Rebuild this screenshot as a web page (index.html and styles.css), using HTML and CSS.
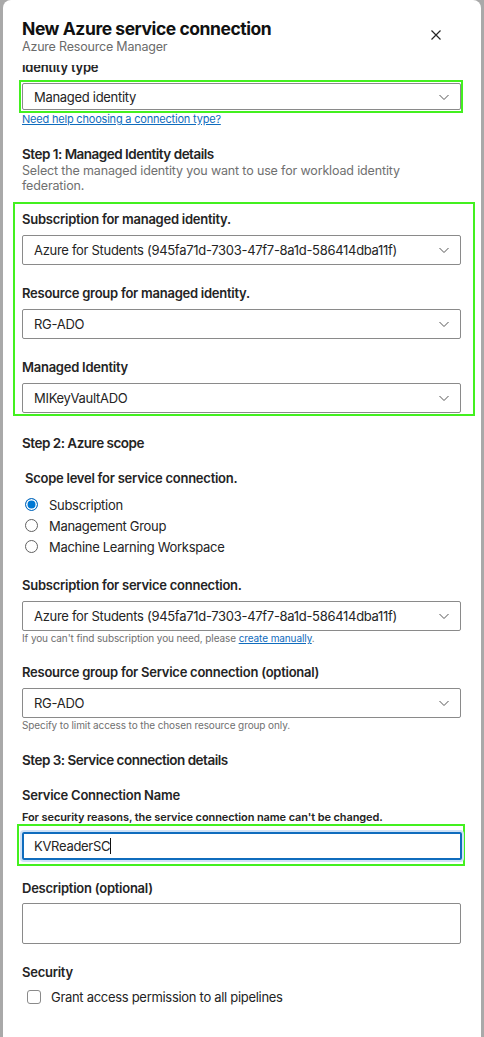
FILE: index.html
```html
<!DOCTYPE html>
<html lang="en">

<head>
    <meta charset="UTF-8">
    <meta name="viewport" content="width=device-width, initial-scale=1.0">
    <title>New Azure service connection</title>
    <link rel="stylesheet" href="styles.css">
</head>

<body>
    <div class="panel">
        <header class="panel-header">
            <div>
                <h1 class="panel-title">New Azure service connection</h1>
                <p class="panel-subtitle">Azure Resource Manager</p>
            </div>
            <button class="close-btn" aria-label="Close">
                <svg width="12" height="12" viewBox="0 0 12 12">
                    <path d="M1.5 1.5l9 9M10.5 1.5l-9 9" stroke="#242424" stroke-width="1.2" fill="none" />
                </svg>
            </button>
        </header>

        <div class="panel-body">
            <div class="form">
                <label class="field-label type-label">Identity type</label>
                <div class="mark mark-type">
                    <div class="select select-sm">
                        <span>Managed identity</span>
                        <svg class="chevron" width="12" height="12" viewBox="0 0 12 12"><path d="M1.5 4l4.5 4.5 4.5-4.5" /></svg>
                    </div>
                </div>
                <a class="help-link" href="#">Need help choosing a connection type?</a>

                <!-- step 1 -->
                <h2 class="step-title step-first">Step 1: Managed Identity details</h2>
                <p class="step-desc">Select the managed identity you want to use for workload identity federation.</p>

                <div class="mark mark-identity">
                    <div class="field">
                        <label class="field-label">Subscription for managed identity.</label>
                        <div class="select">
                            <span>Azure for Students (945fa71d-7303-47f7-8a1d-586414dba11f)</span>
                            <svg class="chevron" width="12" height="12" viewBox="0 0 12 12"><path d="M1.5 4l4.5 4.5 4.5-4.5" /></svg>
                        </div>
                    </div>
                    <div class="field">
                        <label class="field-label">Resource group for managed identity.</label>
                        <div class="select">
                            <span>RG-ADO</span>
                            <svg class="chevron" width="12" height="12" viewBox="0 0 12 12"><path d="M1.5 4l4.5 4.5 4.5-4.5" /></svg>
                        </div>
                    </div>
                    <div class="field">
                        <label class="field-label">Managed Identity</label>
                        <div class="select">
                            <span>MIKeyVaultADO</span>
                            <svg class="chevron" width="12" height="12" viewBox="0 0 12 12"><path d="M1.5 4l4.5 4.5 4.5-4.5" /></svg>
                        </div>
                    </div>
                </div>

                <!-- step 2 -->
                <h2 class="step-title step-next">Step 2: Azure scope</h2>
                <label class="field-label scope-label">Scope level for service connection.</label>
                <div class="radio-list">
                    <div class="radio-row"><span class="radio checked"></span>Subscription</div>
                    <div class="radio-row"><span class="radio"></span>Management Group</div>
                    <div class="radio-row"><span class="radio"></span>Machine Learning Workspace</div>
                </div>

                <div class="field field-sub">
                    <label class="field-label">Subscription for service connection.</label>
                    <div class="select">
                        <span>Azure for Students (945fa71d-7303-47f7-8a1d-586414dba11f)</span>
                        <svg class="chevron" width="12" height="12" viewBox="0 0 12 12"><path d="M1.5 4l4.5 4.5 4.5-4.5" /></svg>
                    </div>
                    <p class="hint">If you can't find subscription you need, please <a href="#">create manually</a>.</p>
                </div>

                <div class="field field-rg">
                    <label class="field-label">Resource group for Service connection (optional)</label>
                    <div class="select">
                        <span>RG-ADO</span>
                        <svg class="chevron" width="12" height="12" viewBox="0 0 12 12"><path d="M1.5 4l4.5 4.5 4.5-4.5" /></svg>
                    </div>
                    <p class="hint">Specify to limit access to the chosen resource group only.</p>
                </div>

                <!-- step 3 -->
                <h2 class="step-title step-last">Step 3: Service connection details</h2>
                <label class="field-label name-label">Service Connection Name</label>
                <p class="note">For security reasons, the service connection name can't be changed.</p>
                <div class="mark mark-name">
                    <div class="input-focus">KVReaderSC<span class="caret"></span></div>
                </div>

                <label class="field-label desc-label">Description (optional)</label>
                <div class="textarea"></div>

                <label class="field-label security-label">Security</label>
                <div class="check-row"><span class="checkbox"></span>Grant access permission to all pipelines</div>
            </div>
        </div>
    </div>
</body>

</html>
```

FILE: styles.css
```css
* {
    box-sizing: border-box;
}

body {
    margin: 0;
    height: 100vh;
    overflow: hidden;
    background-color: #a9a9a9;
    font-family: Inter, "Noto Sans", sans-serif;
    color: #242424;
}

.panel {
    margin: 0 3px;
    height: 100vh;
    background-color: #fff;
    border-radius: 8px 8px 0 0;
    display: flex;
    flex-direction: column;
}

.panel-header {
    display: flex;
    justify-content: space-between;
    padding: 18px 33px 12px 19px;
}

.panel-title {
    margin: 0;
    font-size: 17.5px;
    line-height: 22px;
    font-weight: 700;
    letter-spacing: -0.45px;
    color: #111;
}

.panel-subtitle {
    margin: 0;
    font-size: 12.5px;
    line-height: 13px;
    letter-spacing: -0.2px;
    color: #6b6b6b;
}

.close-btn {
    width: 24px;
    height: 24px;
    margin-top: 5px;
    padding: 0;
    border: 0;
    background: none;
    display: flex;
    align-items: center;
    justify-content: center;
}

.panel-body {
    flex: 1;
    overflow: hidden;
    padding: 0 20px 0 19px;
}

/* content is scrolled a little, the first label is cut off */
.form {
    margin-top: -6px;
}

.field-label {
    display: block;
    font-size: 13px;
    line-height: 16px;
    font-weight: 600;
    letter-spacing: -0.25px;
    margin-bottom: 8px;
}

.select {
    height: 30px;
    border: 1px solid #8a8a8a;
    border-radius: 2px;
    padding: 0 10px 0 11px;
    display: flex;
    align-items: center;
    justify-content: space-between;
    font-size: 13px;
    letter-spacing: -0.3px;
}

.select-sm {
    height: 27px;
}

.chevron path {
    fill: none;
    stroke: #555;
    stroke-width: 1;
}

/* green highlight frames */
.mark {
    border: 2px solid #43f01f;
}

.type-label {
    margin-bottom: 5px;
}

.mark-type {
    margin: 0 -2px 0 -3px;
    padding: 1px 0 1px 1px;
}

.help-link {
    display: block;
    width: fit-content;
    font-size: 11px;
    line-height: 12px;
    letter-spacing: -0.2px;
    color: #0f6cbd;
}

.step-title {
    margin: 0;
    font-size: 13.5px;
    line-height: 18px;
    font-weight: 600;
    letter-spacing: -0.5px;
}

.step-first {
    margin-top: 20px;
}

.step-next {
    margin-top: 18px;
}

.step-last {
    margin-top: 19px;
}

.step-desc {
    margin: 0;
    font-size: 12.5px;
    line-height: 15px;
    letter-spacing: -0.15px;
    color: #707070;
}

.mark-identity {
    margin: 9px -14px 0 -9px;
    padding: 7px 12px 1px 7px;
}

.field + .field {
    margin-top: 20px;
}

.scope-label {
    margin: 18px 0 8px 3px;
}

.radio-row {
    height: 21px;
    padding-left: 3px;
    display: flex;
    align-items: center;
    gap: 11px;
    font-size: 13px;
    letter-spacing: -0.3px;
}

.radio {
    width: 13px;
    height: 13px;
    border: 1px solid #616161;
    border-radius: 50%;
}

.radio.checked {
    border: 1.5px solid #0f6cbd;
    background-color: #0078d4;
    box-shadow: inset 0 0 0 1.5px #fff;
}

.field-sub {
    margin-top: 20px;
}

.field.field-rg {
    margin-top: 19px;
}

.hint {
    margin: 1px 0 0;
    font-size: 10px;
    line-height: 13px;
    letter-spacing: -0.1px;
    color: #707070;
}

.hint a {
    color: #0f6cbd;
}

.name-label {
    margin-top: 18px;
}

.note {
    margin: 0;
    font-size: 11px;
    line-height: 13px;
    font-weight: 600;
    letter-spacing: -0.1px;
}

.mark-name {
    margin: 0 -4px 0 -5px;
    padding: 6px 1px 4px 3px;
}

.input-focus {
    height: 28px;
    border: 2px solid #0f6cbd;
    border-radius: 2px;
    box-shadow: 0 0 0 2px #cfe2f7;
    padding-left: 10px;
    display: flex;
    align-items: center;
    font-size: 13px;
    letter-spacing: -0.3px;
}

.caret {
    width: 1px;
    height: 16px;
    background-color: #111;
}

.desc-label {
    margin-top: 14px;
    margin-bottom: 7px;
}

.textarea {
    height: 41px;
    border: 1px solid #8a8a8a;
    border-radius: 2px;
}

.security-label {
    margin-top: 20px;
    margin-bottom: 6px;
}

.check-row {
    height: 21px;
    padding-left: 5px;
    display: flex;
    align-items: center;
    gap: 10px;
    font-size: 13px;
    letter-spacing: -0.3px;
}

.checkbox {
    width: 14px;
    height: 14px;
    border: 1px solid #8a8a8a;
    border-radius: 3px;
}
```
